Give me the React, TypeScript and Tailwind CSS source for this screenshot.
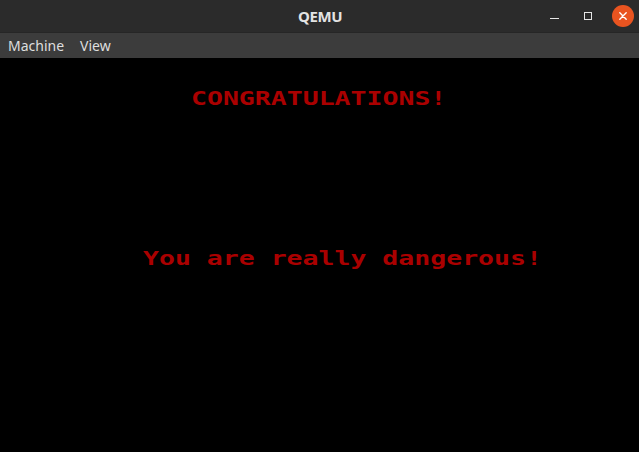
import React from "react";

function PixelLine({ text, col }: { text: string; col: number }) {
  return (
    <div className="h-[16px] leading-[16px] whitespace-pre" style={{ paddingLeft: col * 16 - 1 }}>
      <span className="inline-block origin-left scale-x-[1.395] font-['DejaVu_Sans_Mono',monospace] font-bold text-[19px] leading-[16px] text-[#aa0000]">
        {text}
      </span>
    </div>
  );
}

export default function App() {
  return (
    <div className="w-[639px] h-[452px] flex flex-col bg-black overflow-hidden">
      <div className="h-[32px] shrink-0 bg-[#2b2b2b] grid grid-cols-[1fr_auto_1fr] items-center font-['Noto_Sans',sans-serif]">
        <div />
        <div className="text-[15px] font-bold text-[#e3e3e3] tracking-[-0.4px] pl-[1px]">QEMU</div>
        <div className="flex items-center justify-end pr-[5px]">
          <div className="w-[9px] h-[1.5px] bg-[#e6e6e6] mt-[5px]" />
          <div className="w-[8px] h-[8px] border border-[#e6e6e6] ml-[25px]" />
          <div className="w-[22px] h-[22px] ml-[20px] rounded-full bg-[#e95420] flex items-center justify-center">
            <svg width="10" height="10" viewBox="0 0 10 10">
              <path d="M1.8 1.8 L8.2 8.2 M8.2 1.8 L1.8 8.2" stroke="#ffffff" strokeWidth="1.4" strokeLinecap="round" />
            </svg>
          </div>
        </div>
      </div>
      <div className="h-[26px] shrink-0 bg-[#3c3c3c] border-t border-[#262626] flex items-center gap-[16px] pl-[8px] font-['Noto_Sans',sans-serif] text-[14px] text-[#dedede]">
        <span>Machine</span>
        <span>View</span>
      </div>
      <div className="flex-1 bg-black pt-[32px]">
        <PixelLine text="CONGRATULATIONS!" col={12} />
        <div className="h-[144px]" />
        <PixelLine text="You are really dangerous!" col={9} />
      </div>
    </div>
  );
}
